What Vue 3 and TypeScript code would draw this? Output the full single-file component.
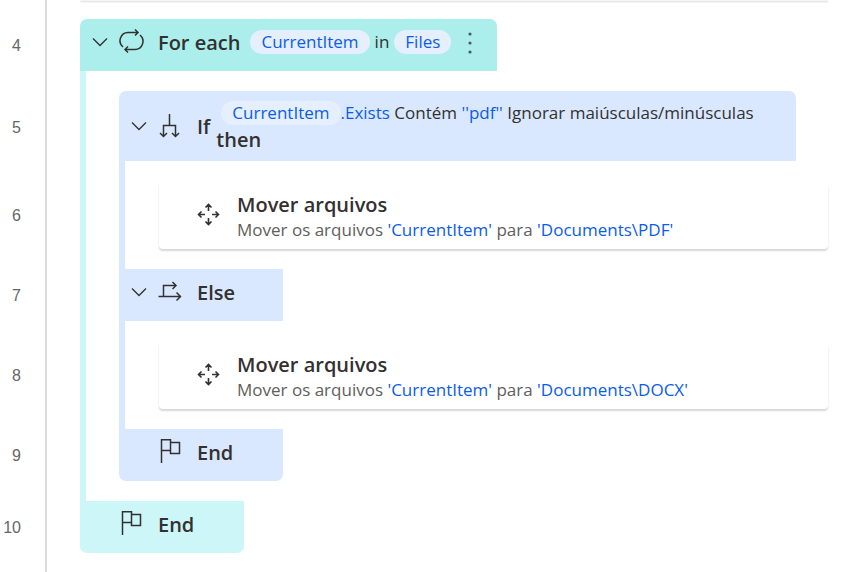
<script setup lang="ts">
type Kind = 'loop' | 'if' | 'else' | 'end' | 'move'

interface Token {
  text: string
  style?: 'chip' | 'link'
}

interface Step {
  line: number
  kind: Kind
  depth: number
  tone: string
  title: string
  collapsible?: boolean
  tokens?: Token[]
}

const moveTokens = (target: string): Token[] => [
  { text: 'Mover os arquivos ' },
  { text: "'CurrentItem'", style: 'link' },
  { text: ' para ' },
  { text: `'Documents\\${target}'`, style: 'link' },
]

const steps: Step[] = [
  {
    line: 4, kind: 'loop', depth: 0, tone: 'teal', title: 'For each', collapsible: true,
    tokens: [{ text: 'CurrentItem', style: 'chip' }, { text: 'in' }, { text: 'Files', style: 'chip' }],
  },
  {
    line: 5, kind: 'if', depth: 1, tone: 'blue', title: 'If', collapsible: true,
    tokens: [
      { text: 'CurrentItem', style: 'chip' },
      { text: '.Exists', style: 'link' },
      { text: ' Contém ' },
      { text: "''pdf''", style: 'link' },
      { text: ' Ignorar maiúsculas/minúsculas' },
    ],
  },
  { line: 6, kind: 'move', depth: 2, tone: 'card', title: 'Mover arquivos', tokens: moveTokens('PDF') },
  { line: 7, kind: 'else', depth: 1, tone: 'blue', title: 'Else', collapsible: true },
  { line: 8, kind: 'move', depth: 2, tone: 'card', title: 'Mover arquivos', tokens: moveTokens('DOCX') },
  { line: 9, kind: 'end', depth: 1, tone: 'blue', title: 'End' },
  { line: 10, kind: 'end', depth: 0, tone: 'aqua', title: 'End' },
]

const icons: Record<Kind, string> = {
  loop: 'M4 18A8.200 8.200 0 0 1 9 3.500H19M16 0.500L19 3.500L16 6.500M21 6A8.200 8.200 0 0 1 16 20.500H6M9 17.500L6 20.500L9 23.500',
  if: 'M11.500 1V12.500M5.500 23.500V12.500H17.500V23.500M2 20L5.500 23.500L9 20M14 20L17.500 23.500L21 20',
  else: 'M0.500 17.500H22.500M18.500 13.500L22.500 17.500L18.500 21.500M5.500 17.500V6.500H18M14.500 3L18 6.500L14.500 10',
  end: 'M3.500 24V0.750H12.500V11.500H3.500M12.500 3.500H21.500V14.500H12.500V3.500',
  move: 'M12.500 9V3M9.500 5.500L12.500 2.500L15.500 5.500M12.500 16V22.500M9.500 19.500L12.500 22.500L15.500 19.500M9 12.500H2.500M5.500 9.500L2.500 12.500L5.500 15.500M16 12.500H22.500M19.500 9.500L22.500 12.500L19.500 15.500',
}
</script>

<template>
  <main class="flow">
    <div class="row previous">
      <span class="line"></span>
      <div class="card-tail"></div>
    </div>
    <section v-for="step in steps" :key="step.line" class="row" :class="[step.kind, 'depth-' + step.depth]">
      <span class="line">{{ step.line }}</span>
      <span v-if="step.depth > 0" class="rail outer"></span>
      <span v-if="step.depth > 1" class="rail inner"></span>
      <div class="block" :class="step.tone">
        <button v-if="step.collapsible" class="toggle" type="button" :aria-label="'Recolher ' + step.title">
          <svg viewBox="0 0 16 16"><path d="M1 4.500L8 11.500L15 4.500" /></svg>
        </button>
        <svg class="icon" viewBox="0 0 26 26" aria-hidden="true"><path :d="icons[step.kind]" /></svg>
        <template v-if="step.kind === 'move'">
          <div class="action">
            <h2>{{ step.title }}</h2>
            <p><span v-for="(t, i) in step.tokens" :key="i" :class="t.style">{{ t.text }}</span></p>
          </div>
        </template>
        <template v-else>
          <h2>{{ step.title }}</h2>
          <div v-if="step.tokens" class="params">
            <p><span v-for="(t, i) in step.tokens" :key="i" :class="t.style">{{ t.text }}</span></p>
            <h2 v-if="step.kind === 'if'">then</h2>
          </div>
          <button v-if="step.kind === 'loop'" class="more" type="button" aria-label="Mais ações">
            <svg viewBox="0 0 6 24"><circle cx="3" cy="3" r="1.600" /><circle cx="3" cy="12" r="1.600" /><circle cx="3" cy="21" r="1.600" /></svg>
          </button>
        </template>
      </div>
    </section>
    <div class="row rest"><span class="line"></span></div>
  </main>
</template>

<style>
body {
  background: #fff;
}
</style>

<style scoped>
.flow {
  display: flex;
  flex-direction: column;
  min-height: 100vh;
  color: #323130;
  font: 17px/24px "Segoe UI", "Open Sans", "Noto Sans", sans-serif;
}
.row {
  display: flex;
}
.line {
  display: flex;
  align-items: center;
  justify-content: flex-end;
  box-sizing: border-box;
  flex: none;
  width: 47px;
  margin-right: 33px;
  padding-right: 24px;
  padding-top: 2px;
  border-right: 2px solid #dcdcdc;
  color: #666;
  font: 16px/20px "Liberation Sans", Roboto, sans-serif;
}
.previous {
  height: 19px;
}
.card-tail {
  flex: 1;
  height: 1px;
  margin-right: 25px;
  border-radius: 0 0 4px 4px;
  background: #f4f4f4;
  box-shadow: 0 1px 2px rgba(0, 0, 0, 0.2);
}
.rest {
  flex: 1;
}
.rail {
  box-sizing: border-box;
  flex: none;
}
.outer {
  width: 39px;
  border-left: 6px solid #cdf6f8;
}
.inner {
  width: 40px;
  border-left: 6px solid #dae8ff;
}
.block {
  display: flex;
  align-items: center;
  box-sizing: border-box;
  min-width: 164px;
  min-height: 52px;
  padding: 0 24px 4px 12px;
}
.teal {
  background: #abeeeb;
}
.aqua {
  background: #cdf6f8;
}
.blue {
  background: #dae8ff;
}
.loop .block {
  border-radius: 7px 7px 0 0;
}
.if .block {
  min-height: 70px;
  margin-top: 20px;
  padding: 2px 42px 0 12px;
  border-radius: 7px 7px 0 0;
}
.if .line {
  padding-top: 24px;
}
.end .block {
  padding-left: 39px;
  border-radius: 0 0 7px 7px;
}
.end.depth-1 .block {
  margin-bottom: 20px;
}
.end.depth-1 .line {
  padding-bottom: 20px;
}
.move .block {
  flex: 1;
  min-height: 67px;
  margin: 21px 25px 20px 0;
  padding: 2px 16px 0 37px;
  border-radius: 4px;
  box-shadow: 0 2px 2px rgba(0, 0, 0, 0.16), 0 0 1px rgba(0, 0, 0, 0.04);
}
button {
  display: block;
  flex: none;
  padding: 0;
  border: 0;
  background: none;
  color: inherit;
  cursor: pointer;
}
svg {
  display: block;
  fill: none;
  stroke: #323130;
  stroke-width: 1.5;
}
.toggle,
.toggle svg {
  width: 16px;
  height: 16px;
}
.toggle {
  margin-right: 11px;
}
.toggle,
.icon {
  margin-bottom: 2px;
}
.toggle svg {
  stroke-width: 1.3;
}
.icon {
  flex: none;
  width: 26px;
  height: 26px;
  margin-right: 13px;
}
.move .icon {
  margin-right: 15px;
  margin-bottom: 4px;
  stroke-width: 1.6;
}
h2 {
  margin: 0;
  font-size: 20px;
  font-weight: 600;
  line-height: 26px;
}
p {
  margin: 0;
  white-space: pre-wrap;
}
.loop p {
  display: flex;
  gap: 5px;
}
.params {
  margin-left: 10px;
}
.if .params {
  margin-left: 6px;
}
.if p {
  margin-left: 5px;
}
.if p,
.loop .params {
  margin-bottom: 2px;
}
.chip {
  display: inline-block;
  padding: 0 11px;
  border-radius: 12px;
  background: #e5efff;
  color: #0b5cec;
}
.link {
  color: #0b5cec;
}
.action p {
  color: #605e5c;
}
.action .link {
  color: #0b5cec;
}
.more {
  margin-left: 16px;
}
.more svg {
  width: 6px;
  height: 24px;
  fill: #4b5a5a;
  stroke: none;
}
</style>
